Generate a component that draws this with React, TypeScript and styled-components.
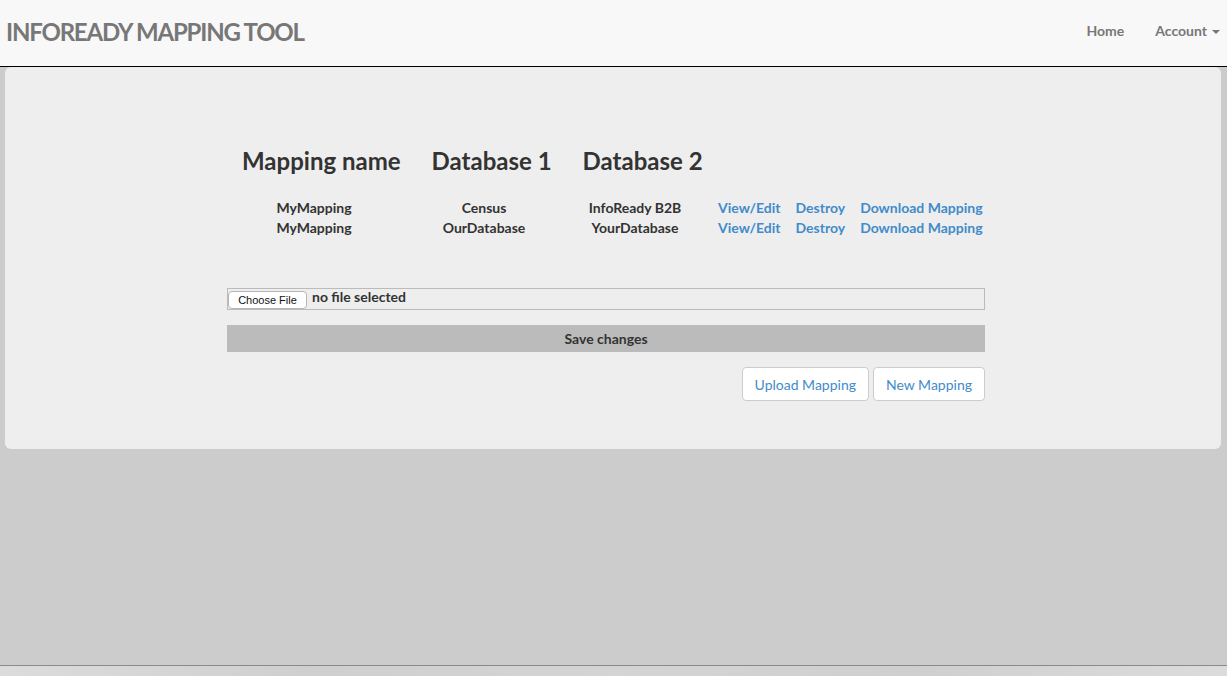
import React from "react";
import styled, { createGlobalStyle } from "styled-components";

const Global = createGlobalStyle`
  html, body { margin: 0; padding: 0; }
  body {
    background: #cccccc;
    font-family: Lato, "Open Sans", "Liberation Sans", sans-serif;
    color: #333;
    font-size: 14px;
    line-height: 20px;
    min-height: 676px;
  }
`;

const Page = styled.div`
  min-height: 676px;
  display: flex;
  flex-direction: column;
`;

const Navbar = styled.header`
  height: 66px;
  background: #f8f8f8;
  border-bottom: 1px solid #000;
  display: flex;
  align-items: center;
  justify-content: space-between;
  padding: 0 0 0 6px;
`;

const Brand = styled.div`
  font-size: 24px;
  font-weight: 700;
  color: #777;
  letter-spacing: -1.2px;
  line-height: 26px;
  padding-bottom: 2px;
`;

const NavLinks = styled.nav`
  display: flex;
  align-items: center;
  gap: 31px;
  padding-right: 7px;
  padding-bottom: 4px;
`;

const NavLink = styled.a`
  font-size: 14px;
  font-weight: 700;
  color: #777;
  text-decoration: none;
  display: flex;
  align-items: center;
  gap: 5px;
`;

const Caret = styled.span`
  display: inline-block;
  width: 0;
  height: 0;
  border-left: 4px solid transparent;
  border-right: 4px solid transparent;
  border-top: 4px solid #777;
  margin-top: 2px;
`;

const Card = styled.main`
  margin: 0 6px 0 5px;
  background: #eeeeee;
  border-radius: 6px;
  padding: 81px 0 48px 222px;
`;

const Content = styled.div`
  width: 758px;
  display: flex;
  flex-direction: column;
`;

const HeaderRow = styled.div`
  display: flex;
  gap: 31px;
  padding-left: 15px;
  margin-bottom: 24px;
`;

const HeaderCell = styled.h3`
  margin: 0;
  font-size: 24px;
  line-height: 26px;
  font-weight: 700;
  color: #333;
`;

const Table = styled.div`
  display: grid;
  grid-template-columns: 174px 166px 136px auto auto auto;
  justify-content: start;
`;

const Cell = styled.div`
  text-align: center;
  font-weight: 700;
  font-size: 14px;
  line-height: 20px;
  color: #333;
`;

const LinkCell = styled.a`
  padding-left: 15px;
  font-weight: 700;
  font-size: 14px;
  line-height: 20px;
  color: #428bca;
  text-decoration: none;
`;

const FileBox = styled.div`
  margin-top: 50px;
  height: 20px;
  border: 1px solid #bbb;
  background: #eee;
  display: flex;
  align-items: center;
  gap: 5px;
`;

const ChooseButton = styled.button`
  height: 18px;
  width: 79px;
  padding: 0;
  background: #fff;
  border: 1px solid #b5b5b5;
  border-radius: 4px;
  font-family: "Liberation Sans", Arial, sans-serif;
  font-size: 11px;
  color: #111;
  margin-top: 2px;
`;

const FileText = styled.span`
  font-weight: 700;
  font-size: 14px;
  color: #333;
  margin-top: -4px;
`;

const SaveBar = styled.div`
  margin-top: 15px;
  height: 27px;
  background: #bbbbbb;
  display: flex;
  align-items: center;
  justify-content: center;
  font-weight: 700;
  font-size: 14px;
  color: #333;
`;

const Actions = styled.div`
  margin-top: 15px;
  display: flex;
  justify-content: flex-end;
  gap: 4px;
`;

const Button = styled.button`
  height: 34px;
  padding: 0 12px;
  background: #fff;
  border: 1px solid #ccc;
  border-radius: 4px;
  font-family: Lato, "Open Sans", sans-serif;
  font-size: 14px;
  color: #428bca;
`;

const Spacer = styled.div`
  flex: 1;
`;

const Footer = styled.div`
  height: 10px;
  border-top: 1px solid #8a8a8a;
  background: linear-gradient(90deg, #dcdcdc, #cfcfcf 25%, #d4d4d4 50%, #cfcfcf 75%, #dcdcdc);
`;

const rows = [
  ["MyMapping", "Census", "InfoReady B2B"],
  ["MyMapping", "OurDatabase", "YourDatabase"],
];

export default function App() {
  return (
    <>
      <Global />
      <Page>
        <Navbar>
          <Brand>INFOREADY MAPPING TOOL</Brand>
          <NavLinks>
            <NavLink href="#">Home</NavLink>
            <NavLink href="#">
              Account <Caret />
            </NavLink>
          </NavLinks>
        </Navbar>
        <Card>
          <Content>
            <HeaderRow>
              <HeaderCell>Mapping name</HeaderCell>
              <HeaderCell>Database 1</HeaderCell>
              <HeaderCell>Database 2</HeaderCell>
            </HeaderRow>
            <Table>
              {rows.map((r, i) => (
                <React.Fragment key={i}>
                  <Cell>{r[0]}</Cell>
                  <Cell>{r[1]}</Cell>
                  <Cell>{r[2]}</Cell>
                  <LinkCell href="#">View/Edit</LinkCell>
                  <LinkCell href="#">Destroy</LinkCell>
                  <LinkCell href="#">Download Mapping</LinkCell>
                </React.Fragment>
              ))}
            </Table>
            <FileBox>
              <ChooseButton>Choose File</ChooseButton>
              <FileText>no file selected</FileText>
            </FileBox>
            <SaveBar>Save changes</SaveBar>
            <Actions>
              <Button>Upload Mapping</Button>
              <Button>New Mapping</Button>
            </Actions>
          </Content>
        </Card>
        <Spacer />
        <Footer />
      </Page>
    </>
  );
}
